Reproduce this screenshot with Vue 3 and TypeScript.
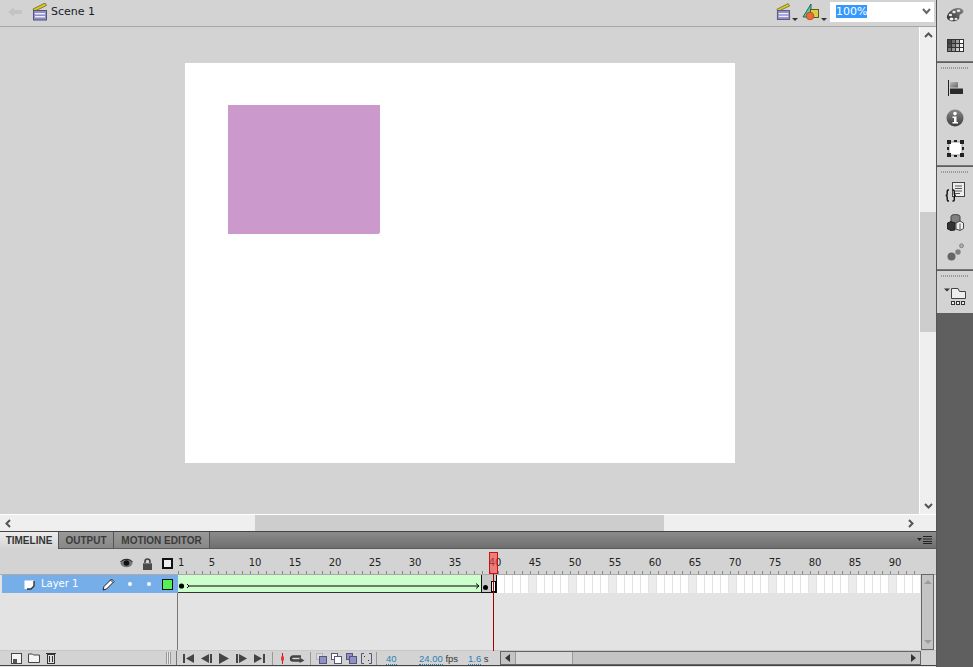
<script setup lang="ts">
const rulerLabels = [5, 10, 15, 20, 25, 30, 35, 40, 45, 50, 55, 60, 65, 70, 75, 80, 85, 90];

// frames after the tween, starting at frame 41
const emptyFrames = Array.from({ length: 53 }, (_, i) => i + 41);

// swatch grid icon in the dock, row by row
const swatches = [
  "#444", "#6e6e6e", "#a0a0a0", "#fff",
  "#4c4c4c", "#808080", "#b4b4b4", "#f0f0f0",
  "#777", "#999", "#ccc", "#fff",
];
</script>

<template>
  <div class="app">
    <div class="main">
      <header class="topbar">
        <svg class="back" width="16" height="12" viewBox="0 0 16 12">
          <path d="M1 6 L7 1 V4 H15 V8 H7 V11 Z" fill="#c4c4c4" />
        </svg>
        <svg class="clapper" width="16" height="18" viewBox="0 0 16 18">
          <path d="M1 6 L13 0 L14.5 2.5 L2 8.5 Z" fill="#d8c820" stroke="#5c5a20" stroke-width="0.7" />
          <rect x="1.5" y="7.5" width="13" height="9.5" fill="#8f8fc8" stroke="#55557a" />
          <rect x="3" y="10" width="10" height="1.4" fill="#eef" />
          <rect x="3" y="13" width="10" height="1.4" fill="#eef" />
        </svg>
        <span class="scene">Scene 1</span>
        <div class="spacer" />
        <span class="tool">
          <svg width="15" height="18" viewBox="0 0 16 18">
            <path d="M1 6 L13 0 L14.5 2.5 L2 8.5 Z" fill="#d8c820" stroke="#5c5a20" stroke-width="0.7" />
            <rect x="1.5" y="7.5" width="13" height="9.5" fill="#8f8fc8" stroke="#55557a" />
            <rect x="3" y="10" width="10" height="1.4" fill="#eef" />
            <rect x="3" y="13" width="10" height="1.4" fill="#eef" />
          </svg>
          <i class="drop" />
        </span>
        <span class="tool">
          <svg width="18" height="18" viewBox="0 0 18 18">
            <path d="M9 1 V14 H1 Z" fill="#5cc8a0" stroke="#1a6a58" />
            <rect x="8.5" y="6.5" width="8" height="8" fill="#d8d040" stroke="#5c5a20" />
            <circle cx="8" cy="13" r="3.8" fill="#ec6a3c" stroke="#a83c1c" stroke-width="0.7" />
          </svg>
          <i class="drop" />
        </span>
        <div class="zoom-box">
          <span class="zoom-value">100%</span>
          <svg width="9" height="7" viewBox="0 0 9 7">
            <path d="M1 1 L4.5 5 L8 1" fill="none" stroke="#666" stroke-width="2" />
          </svg>
        </div>
      </header>

      <div class="stage-row">
        <div class="pasteboard">
          <div class="canvas">
            <div class="shape" />
          </div>
        </div>
        <div class="vscroll">
          <svg width="9" height="6" viewBox="0 0 9 6"><path d="M1 5 L4.5 1.5 L8 5" fill="none" stroke="#555" stroke-width="2" /></svg>
          <div class="vthumb" />
          <svg width="9" height="6" viewBox="0 0 9 6"><path d="M1 1 L4.5 4.5 L8 1" fill="none" stroke="#555" stroke-width="2" /></svg>
        </div>
      </div>
      <div class="hscroll">
        <svg width="6" height="9" viewBox="0 0 6 9"><path d="M5 1 L1.5 4.5 L5 8" fill="none" stroke="#555" stroke-width="2" /></svg>
        <div class="hthumb" />
        <svg width="6" height="9" viewBox="0 0 6 9"><path d="M1 1 L4.5 4.5 L1 8" fill="none" stroke="#555" stroke-width="2" /></svg>
      </div>

      <section class="timeline">
        <nav class="tabs">
          <span class="tab active">TIMELINE</span>
          <span class="tab output">OUTPUT</span>
          <span class="tab motion">MOTION EDITOR</span>
          <div class="spacer" />
          <svg class="panel-menu" width="15" height="8" viewBox="0 0 15 8">
            <path d="M0 2 H5 L2.5 5 Z" fill="#222" />
            <path d="M6 0.5 H15 M6 3 H15 M6 5.5 H15 M6 7.5 H15" stroke="#222" stroke-width="1" />
          </svg>
        </nav>

        <div class="tl-body">
          <div class="tl-head">
            <div class="head-icons">
              <svg width="13" height="11" viewBox="0 0 13 11">
                <ellipse cx="6.5" cy="5" rx="6" ry="4.200" fill="#777" />
                <circle cx="6.5" cy="5" r="2.800" fill="#111" />
                <path d="M0.500 4 C3 0.500 10 0.500 12.500 4" fill="none" stroke="#222" />
              </svg>
              <svg width="11" height="12" viewBox="0 0 11 12">
                <path d="M3 5 V3.5 A2.5 2.5 0 0 1 8 3.5 V5" fill="none" stroke="#444" stroke-width="1.6" />
                <rect x="1" y="5" width="9" height="7" fill="#4a4a4a" />
                <rect x="1" y="5" width="9" height="1" fill="#777" />
              </svg>
              <span class="outline-box" />
            </div>
            <div class="ruler">
              <span class="first">1</span>
              <span v-for="n in rulerLabels" :key="n" class="mark">{{ n }}</span>
            </div>
            <div class="head-end" />
          </div>

          <div class="layer-row">
            <div class="layer-info">
              <svg class="layer-icon" width="11" height="11" viewBox="0 0 11 11">
                <path d="M0.5 1.5 H10 V7 L7 10 H0.5 Z" fill="#fff" />
                <path d="M10 2 V7 L7 10 H3" fill="none" stroke="#333" stroke-width="1.4" />
              </svg>
              <span class="layer-name">Layer 1</span>
              <svg class="pencil" width="13" height="13" viewBox="0 0 13 13">
                <path d="M1 12 L2 8.5 L9.5 1 L12 3.5 L4.5 11 Z" fill="#fff" stroke="#222" />
                <path d="M8.5 2 L11 4.5" stroke="#222" />
              </svg>
              <i class="dot" />
              <i class="dot last-dot" />
              <span class="layer-color" />
            </div>
            <div class="frames">
              <div class="tween">
                <svg width="303" height="8" viewBox="0 0 303 8">
                  <circle cx="3.5" cy="4" r="2.6" fill="#000" />
                  <path d="M9 2 L11 4 L9 6" fill="none" stroke="#000" />
                  <path d="M11 4 H301 M298 1.5 L301 4 L298 6.5" fill="none" stroke="#000" />
                </svg>
              </div>
              <div class="keyframes">
                <i class="key-dot" />
                <i class="key-end" />
              </div>
              <i v-for="n in emptyFrames" :key="n" class="frame" :class="{ fifth: n % 5 === 0 }" />
            </div>
          </div>

          <div class="layer-empty">
            <div class="empty-left" />
            <div class="empty-right" />
          </div>

          <div class="tl-vscroll">
            <i class="up" />
            <i class="down" />
          </div>

          <div class="playhead">
            <div class="playhead-tab" />
            <div class="playhead-line" />
          </div>

          <footer class="controls">
            <div class="layer-tools">
              <svg width="11" height="11" viewBox="0 0 11 11">
                <rect x="0.5" y="0.5" width="10" height="10" fill="#f4f4f4" stroke="#444" />
                <rect x="2" y="6" width="4" height="4" fill="#555" />
              </svg>
              <svg width="12" height="10" viewBox="0 0 12 10">
                <path d="M0.5 9.5 V1 H4.5 L5.5 2 H11.5 V9.5 Z" fill="#f4f4f4" stroke="#444" />
              </svg>
              <svg width="10" height="12" viewBox="0 0 10 12">
                <rect x="1.5" y="2.5" width="7" height="9" fill="#ddd" stroke="#333" />
                <path d="M0 1.5 H10 M3.5 4 V10 M6.5 4 V10" stroke="#333" />
              </svg>
              <div class="spacer" />
              <i class="grip" />
            </div>
            <div class="play-tools">
              <svg width="11" height="9" viewBox="0 0 11 9"><path d="M0 0 H2 V9 H0 Z M11 0 V9 L3 4.5 Z" fill="#444" /></svg>
              <svg width="11" height="9" viewBox="0 0 11 9"><path d="M9 0 H11 V9 H9 Z M8 0 V9 L0 4.5 Z" fill="#444" /></svg>
              <svg width="10" height="11" viewBox="0 0 10 11"><path d="M0 0 L10 5.5 L0 11 Z" fill="#444" /></svg>
              <svg width="11" height="9" viewBox="0 0 11 9"><path d="M0 0 H2 V9 H0 Z M3 0 L11 4.5 L3 9 Z" fill="#444" /></svg>
              <svg width="11" height="9" viewBox="0 0 11 9"><path d="M9 0 H11 V9 H9 Z M0 0 L8 4.5 L0 9 Z" fill="#444" /></svg>
            </div>
            <i class="sep" />
            <div class="loop-tools">
              <svg width="5" height="11" viewBox="0 0 5 11"><path d="M2.5 0 V11" stroke="#d01818" /><rect x="1" y="3.5" width="3" height="4" fill="#e83838" /></svg>
              <svg width="16" height="9" viewBox="0 0 16 9">
                <path d="M12 2.5 H4 A2 2 0 0 0 4 6.5 H11" fill="none" stroke="#444" stroke-width="2.4" />
                <path d="M10.5 3.5 L15.5 6.5 L10.5 9 Z" fill="#444" />
              </svg>
            </div>
            <i class="sep" />
            <div class="onion-tools">
              <svg width="11" height="11" viewBox="0 0 11 11"><rect x="0.5" y="0.5" width="6" height="6" fill="#ddd" stroke="#8c8cb4" stroke-dasharray="1 1" /><rect x="3.5" y="3.5" width="7" height="7" fill="#9090c4" stroke="#55557a" /></svg>
              <svg width="11" height="11" viewBox="0 0 11 11"><rect x="0.5" y="0.5" width="6" height="6" fill="#fff" stroke="#55557a" /><rect x="3.5" y="3.5" width="7" height="7" fill="#fff" stroke="#55557a" /></svg>
              <svg width="11" height="11" viewBox="0 0 11 11"><rect x="0.5" y="0.5" width="6" height="6" fill="#9090c4" stroke="#55557a" /><rect x="3.5" y="3.5" width="7" height="7" fill="#9090c4" stroke="#55557a" /></svg>
              <svg width="11" height="11" viewBox="0 0 11 11"><path d="M3 .5 H.5 V10.5 H3 M8 .5 H10.5 V10.5 H8" fill="none" stroke="#55557a" /><rect x="3" y="3" width="1" height="1" fill="#333" /><rect x="7" y="7" width="1" height="1" fill="#333" /></svg>
            </div>
            <i class="sep" />
            <div class="readouts">
              <span class="frame-val"><span class="val">40</span></span>
              <span class="fps"><span class="val">24.00</span> fps</span>
              <span class="time"><span class="val">1.6</span> s</span>
            </div>
            <div class="tl-hscroll">
              <i class="left" />
              <div class="tl-hthumb" />
              <div class="spacer" />
              <i class="right" />
            </div>
          </footer>
        </div>
      </section>
    </div>

    <aside class="dock">
      <div class="dock-group top-group">
        <span class="dock-btn">
          <svg width="18" height="16" viewBox="0 0 18 16">
            <defs>
              <linearGradient id="palette" x1="1" y1="0" x2="0" y2="1">
                <stop offset="0" stop-color="#8a8a8a" />
                <stop offset="1" stop-color="#2a2a2a" />
              </linearGradient>
            </defs>
            <path d="M1 11 C0 6 8 0 13 1 C18 2 18.500 5 16 6.500 C13.500 7.500 13 9 13.500 10.500 C13 15 3 16 1 11 Z" fill="url(#palette)" />
            <ellipse cx="4.500" cy="8" rx="1.700" ry="1.300" fill="#e8e8e8" />
            <ellipse cx="8" cy="5" rx="1.700" ry="1.300" fill="#e8e8e8" />
            <ellipse cx="12.500" cy="3.800" rx="1.700" ry="1.300" fill="#e8e8e8" />
            <ellipse cx="5.500" cy="12" rx="2" ry="1.500" fill="#f4f4f4" />
            <ellipse cx="10" cy="12" rx="1.600" ry="1.200" fill="#ddd" />
          </svg>
        </span>
        <span class="dock-btn">
          <svg width="17" height="13" viewBox="0 0 17 13">
            <rect width="17" height="13" fill="#333" />
            <g v-for="(c, i) in swatches" :key="i">
              <rect :x="1 + (i % 4) * 4" :y="1 + Math.floor(i / 4) * 4" width="3" height="3" :fill="c" />
            </g>
          </svg>
        </span>
      </div>
      <div class="dock-group">
        <i class="dots" />
        <span class="dock-btn">
          <svg width="15" height="16" viewBox="0 0 15 16">
            <defs>
              <linearGradient id="alignTop" x1="0" y1="0" x2="1" y2="1">
                <stop offset="0" stop-color="#bbb" />
                <stop offset="1" stop-color="#666" />
              </linearGradient>
            </defs>
            <path d="M0.5 0 V16" stroke="#222" />
            <rect x="2" y="2" width="8" height="5.500" fill="url(#alignTop)" />
            <rect x="2" y="8.500" width="13" height="5.500" fill="#2c2c2c" />
          </svg>
        </span>
        <span class="dock-btn">
          <svg width="18" height="18" viewBox="0 0 18 18">
            <defs>
              <linearGradient id="info" x1="0" y1="0" x2="0" y2="1">
                <stop offset="0" stop-color="#8a8a8a" />
                <stop offset="1" stop-color="#3c3c3c" />
              </linearGradient>
            </defs>
            <circle cx="9" cy="9" r="8.500" fill="url(#info)" />
            <circle cx="9" cy="4.600" r="1.800" fill="#fff" />
            <path d="M6.500 7.500 H10.500 V13 H12 V14.500 H6.500 V13 H8 V9 H6.500 Z" fill="#fff" />
          </svg>
        </span>
        <span class="dock-btn">
          <svg width="17" height="17" viewBox="0 0 17 17">
            <rect x="2" y="2" width="13" height="13" fill="#fff" stroke="#999" />
            <path d="M0 0 H4 V4 H0 Z M13 0 H17 V4 H13 Z M0 13 H4 V17 H0 Z M13 13 H17 V17 H13 Z M7 0 H10 V2 H7 Z M7 15 H10 V17 H7 Z M0 7 H2 V10 H0 Z M15 7 H17 V10 H15 Z" fill="#222" />
          </svg>
        </span>
      </div>
      <div class="dock-group">
        <i class="dots" />
        <span class="dock-btn">
          <svg width="20" height="20" viewBox="0 0 20 20">
            <rect x="7.500" y="0.500" width="12" height="14" fill="#eee" stroke="#444" />
            <path d="M10 4 H17 M10 6.500 H17 M10 9 H17 M10 11.500 H15" stroke="#555" />
            <path d="M4 8 H3.200 Q2.200 8 2.200 9.500 V12 Q2.200 13.500 0.700 13.500 Q2.200 13.500 2.200 15 V17.500 Q2.200 19 3.200 19 H4" fill="none" stroke="#111" stroke-width="1.400" />
            <path d="M7.500 8 H8.300 Q9.300 8 9.300 9.500 V12 Q9.300 13.500 10.800 13.500 Q9.300 13.500 9.300 15 V17.500 Q9.300 19 8.300 19 H7.500" fill="none" stroke="#111" stroke-width="1.400" />
          </svg>
        </span>
        <span class="dock-btn">
          <svg width="17" height="17" viewBox="0 0 17 17">
            <path d="M4 2.500 A4.500 2 0 0 1 13 2.500 V9 H4 Z" fill="#808080" stroke="#444" />
            <path d="M0.500 9 L4 7.500 L8 9 V16 L4 16.500 L0.500 15 Z" fill="#333" stroke="#222" />
            <path d="M9 9 L13 7 L16.500 9 V14.500 L13 16.500 L9 15 Z" fill="#f0f0f0" stroke="#444" />
            <path d="M13 9.500 V16 " stroke="#555" />
          </svg>
        </span>
        <span class="dock-btn">
          <svg width="17" height="18" viewBox="0 0 17 18">
            <circle cx="4.500" cy="13.500" r="4" fill="#666" />
            <circle cx="11" cy="9" r="2.700" fill="#808080" />
            <circle cx="14.500" cy="2.800" r="2" fill="#aaa" stroke="#777" stroke-width="0.700" />
          </svg>
        </span>
      </div>
      <div class="dock-group">
        <i class="dots" />
        <span class="dock-btn">
          <svg width="22" height="17" viewBox="0 0 22 17">
            <path d="M0 0.500 H6 L3 3.500 Z" fill="#333" />
            <path d="M7.500 10.500 V0.500 H14 L15.500 3.500 H21.500 V10.500 Z" fill="#eee" stroke="#444" />
            <rect x="7.500" y="13.500" width="3" height="3" fill="#eee" stroke="#333" />
            <rect x="12.500" y="13.500" width="3" height="3" fill="#eee" stroke="#333" />
            <rect x="17.500" y="13.500" width="3" height="3" fill="#eee" stroke="#333" />
          </svg>
        </span>
      </div>
    </aside>
  </div>
</template>

<style scoped>
.app {
  display: flex;
  width: 973px;
  height: 667px;
  overflow: hidden;
  font-family: "DejaVu Sans", Verdana, sans-serif;
  color: #222;
  background: #d3d3d3;
}

.main {
  width: 936px;
  display: flex;
  flex-direction: column;
}

.spacer {
  flex: 1;
}

.topbar {
  height: 27px;
  flex: none;
  box-sizing: border-box;
  border-bottom: 1px solid #a6a6a6;
  display: flex;
  align-items: center;
  padding: 0 2px 3px 7px;
}

.back {
  margin-right: 9px;
}

.clapper {
  margin-right: 3px;
}

.scene {
  font-size: 11px;
  color: #1a1a2a;
}

.tool {
  display: flex;
  align-items: flex-start;
  margin-right: 4px;
}

.tool + .tool {
  margin-right: 2px;
}

.drop {
  width: 0;
  height: 0;
  align-self: flex-end;
  border: 3px solid transparent;
  border-top: 3px solid #333;
  border-bottom: 0;
  margin-left: 1px;
}

.zoom-box {
  width: 104px;
  height: 20px;
  margin-left: 1px;
  box-sizing: border-box;
  background: #fff;
  display: flex;
  align-items: center;
  justify-content: space-between;
  padding: 0 3px 0 6px;
}

.zoom-value {
  background: #3399ff;
  color: #fff;
  font-size: 11px;
  line-height: 13px;
}

.stage-row {
  display: flex;
  height: 488px;
  flex: none;
  box-sizing: border-box;
  border-bottom: 1px solid #fff;
}

.pasteboard {
  flex: 1;
  padding: 36px 0 0 185px;
  border-right: 1px solid #fff;
}

.canvas {
  width: 550px;
  height: 400px;
  background: #fff;
  padding: 42px 0 0 43px;
  box-sizing: border-box;
}

.shape {
  width: 152px;
  height: 129px;
  background: #cc99cc;
  border-radius: 0 0 2px 0;
}

.vscroll {
  width: 16px;
  background: #efefef;
  display: flex;
  flex-direction: column;
  align-items: center;
  justify-content: space-between;
  padding: 5px 0;
  box-sizing: border-box;
  position: relative;
}

.vthumb {
  position: absolute;
  top: 185px;
  left: 0;
  width: 16px;
  height: 120px;
  background: #cdcdcd;
}

.hscroll {
  height: 17px;
  flex: none;
  box-sizing: border-box;
  background: #efefef;
  display: flex;
  align-items: center;
  justify-content: space-between;
  padding: 0 22px 0 5px;
  position: relative;
  border-bottom: 1px solid #444;
}

.hthumb {
  position: absolute;
  left: 255px;
  top: 0;
  width: 409px;
  height: 16px;
  background: #cdcdcd;
}

.timeline {
  flex: 1;
  display: flex;
  flex-direction: column;
  min-height: 0;
}

.tabs {
  height: 17px;
  flex: none;
  box-sizing: border-box;
  display: flex;
  background: linear-gradient(#8b8b8b, #6f6f6f);
  align-items: stretch;
  border-bottom: 1px solid #5a5a5a;
}

.tab {
  font-family: "Liberation Sans", Arial, sans-serif;
  font-size: 10px;
  font-weight: 700;
  display: flex;
  align-items: center;
  justify-content: center;
  color: #3a3a3a;
  box-sizing: border-box;
  border-right: 1px solid #555;
  background: linear-gradient(#999, #888);
}

.tab.active {
  width: 59px;
  background: linear-gradient(#ededed, #d3d3d3);
  color: #333;
  margin-bottom: -1px;
}

.tab.output {
  width: 55px;
}

.tab.motion {
  width: 96px;
}

.panel-menu {
  margin: 4px 4px 0 0;
}

.tl-body {
  position: relative;
  flex: 1;
  display: flex;
  flex-direction: column;
  background: #e3e3e3;
  min-height: 0;
}

.tl-head {
  height: 25px;
  flex: none;
  display: flex;
  background: #d3d3d3;
  border-bottom: 1px solid #aaa;
}

.head-icons {
  width: 177px;
  flex: none;
  display: flex;
  align-items: center;
  justify-content: flex-end;
  padding: 4px 4px 0 0;
  box-sizing: border-box;
  gap: 9px;
}

.outline-box {
  width: 11px;
  height: 11px;
  border: 2px solid #111;
  box-sizing: border-box;
  background: #eee;
}

.ruler {
  width: 744px;
  flex: none;
  display: flex;
  align-items: flex-end;
  font-size: 10px;
  padding: 0 0 3px 0;
  box-sizing: border-box;
  background: repeating-linear-gradient(90deg, #888 0 1px, transparent 1px 8px) 1px 100% / 100% 3px no-repeat;
  color: #222;
}

.ruler span {
  line-height: 14px;
  margin-bottom: 1px;
}

.first {
  width: 15px;
  padding-left: 1px;
  box-sizing: border-box;
}

.mark {
  width: 40px;
  flex: none;
  text-align: center;
}

.first + .mark {
  width: 43px;
  padding-right: 3px;
  box-sizing: border-box;
}

.head-end {
  flex: 1;
}

.layer-row {
  display: flex;
  height: 18px;
  flex: none;
}

.layer-info {
  width: 177px;
  flex: none;
  margin-left: 2px;
  margin-right: -2px;
  background: #76aeea;
  display: flex;
  align-items: center;
  box-sizing: border-box;
  border-right: 1px solid #777;
  padding-left: 22px;
}

.layer-icon {
  margin-right: 6px;
}

.layer-name {
  color: #fff;
  font-size: 10px;
  width: 61px;
  margin-bottom: 2px;
}

.pencil {
  margin-right: 13px;
}

.dot {
  width: 4px;
  height: 4px;
  border-radius: 50%;
  background: #fff;
  margin-right: 15px;
}

.last-dot {
  margin-right: 11px;
}

.layer-color {
  width: 11px;
  height: 11px;
  box-sizing: border-box;
  background: #55f055;
  border: 1px solid #111;
}

.frames {
  margin-left: 1px;
  display: flex;
  width: 743px;
  height: 18px;
  overflow: hidden;
}

.tween {
  width: 303px;
  flex: none;
  background: #ccffcc;
  display: flex;
  align-items: center;
  height: 18px;
  padding-top: 5px;
  box-sizing: border-box;
  border-bottom: 1px solid #333;
}

.keyframes {
  width: 16px;
  flex: none;
  box-sizing: border-box;
  background: #c9c9c9;
  border: 1px solid #111;
  border-width: 0 1px 1px 1px;
  position: relative;
}

.key-dot {
  position: absolute;
  left: 1px;
  top: 10px;
  width: 5px;
  height: 5px;
  background: #000;
  border-radius: 50%;
}

.key-end {
  position: absolute;
  left: 9px;
  top: 6px;
  width: 3px;
  height: 9px;
  border: 1px solid #000;
  background: #fff;
}

.frame {
  width: 8px;
  flex: none;
  box-sizing: border-box;
  background: #fff;
  border-right: 1px solid #e2e2e2;
}

.frame.fifth {
  background: #ececec;
}

.layer-empty {
  flex: 1;
  display: flex;
}

.empty-left {
  width: 177px;
  border-right: 1px solid #777;
}

.empty-right {
  flex: 1;
}

.tl-vscroll {
  position: absolute;
  left: 921px;
  top: 25px;
  width: 13px;
  height: 76px;
  box-sizing: border-box;
  background: #c4c4c4;
  border: 1px solid #666;
  display: flex;
  flex-direction: column;
  align-items: center;
  justify-content: space-between;
  padding: 5px 0 5px;
}

.up,
.down {
  width: 0;
  height: 0;
  border: 4px solid transparent;
}

.up {
  border-bottom: 4px solid #9c9c9c;
  border-top: 0;
}

.down {
  border-top: 4px solid #9c9c9c;
  border-bottom: 0;
}

.playhead {
  position: absolute;
  left: 489px;
  top: 3px;
  width: 9px;
  display: flex;
  flex-direction: column;
  align-items: center;
  pointer-events: none;
}

.playhead-tab {
  width: 9px;
  height: 22px;
  box-sizing: border-box;
  background: rgba(255, 70, 70, 0.6);
  border: 1px solid #cc1111;
}

.playhead-line {
  width: 1px;
  height: 77px;
  background: #a00;
}

.controls {
  height: 14px;
  flex: none;
  display: flex;
  align-items: center;
  background: #d3d3d3;
  border-top: 1px solid #c8c8c8;
  border-bottom: 1px solid #444;
  margin-bottom: 1px;
}

.layer-tools {
  width: 177px;
  flex: none;
  box-sizing: border-box;
  display: flex;
  align-items: center;
  gap: 6px;
  padding: 0 5px 0 11px;
  border-right: 1px solid #777;
  height: 100%;
}

.grip {
  width: 5px;
  height: 12px;
  background: repeating-linear-gradient(90deg, #999 0 1px, #e8e8e8 1px 2px);
}

.play-tools {
  width: 95px;
  flex: none;
  display: flex;
  align-items: center;
  gap: 7px;
  padding-left: 6px;
  box-sizing: border-box;
}

.sep {
  width: 1px;
  height: 13px;
  background: #999;
  flex: none;
}

.loop-tools {
  width: 37px;
  flex: none;
  box-sizing: border-box;
  display: flex;
  align-items: center;
  gap: 4px;
  padding-left: 7px;
}

.onion-tools {
  width: 65px;
  flex: none;
  box-sizing: border-box;
  display: flex;
  align-items: center;
  gap: 4px;
  padding-left: 5px;
}

.readouts {
  width: 123px;
  flex: none;
  box-sizing: border-box;
  padding-left: 9px;
  display: flex;
  align-items: center;
  font-family: "Liberation Sans", Arial, sans-serif;
  font-size: 9.5px;
  color: #333;
}

.val {
  color: #2d7fb8;
  border-bottom: 1px dotted #2d7fb8;
}

.frame-val {
  width: 33px;
}

.fps {
  width: 49px;
}

.tl-hscroll {
  flex: 1;
  height: 14px;
  margin-right: 15px;
  box-sizing: border-box;
  border: 1px solid #666;
  background: #c4c4c4;
  display: flex;
  align-items: center;
  padding: 0 4px;
}

.tl-hthumb {
  width: 56px;
  height: 12px;
  margin-left: 5px;
  background: #d8d8d8;
  border: 1px solid #999;
  border-width: 0 1px;
}

.left,
.right {
  width: 0;
  height: 0;
  border: 4px solid transparent;
}

.left {
  border-right: 5px solid #333;
  border-left: 0;
}

.right {
  border-left: 5px solid #333;
  border-right: 0;
}

.dock {
  width: 37px;
  flex: none;
  box-sizing: border-box;
  border-left: 1px solid #555;
  background: #5f5f5f;
  display: flex;
  flex-direction: column;
  align-items: stretch;
  align-self: stretch;
}

.dock-group {
  background: #d3d3d3;
  border-bottom: 1px solid #777;
  display: flex;
  flex-direction: column;
  align-items: center;
  padding-bottom: 2px;
  margin-bottom: 1px;
}

.dock-group:last-child {
  border-bottom: 0;
}

.top-group {
  height: 62px;
  box-sizing: border-box;
}

.dots {
  width: 28px;
  height: 2px;
  margin: 4px 0 4px;
  background: repeating-linear-gradient(90deg, #999 0 1px, transparent 1px 2px);
}

.dock-btn {
  height: 30px;
  width: 100%;
  display: flex;
  align-items: center;
  justify-content: center;
  flex: none;
}
</style>

<style>
html,
body {
  margin: 0;
  background: #d3d3d3;
}
</style>
